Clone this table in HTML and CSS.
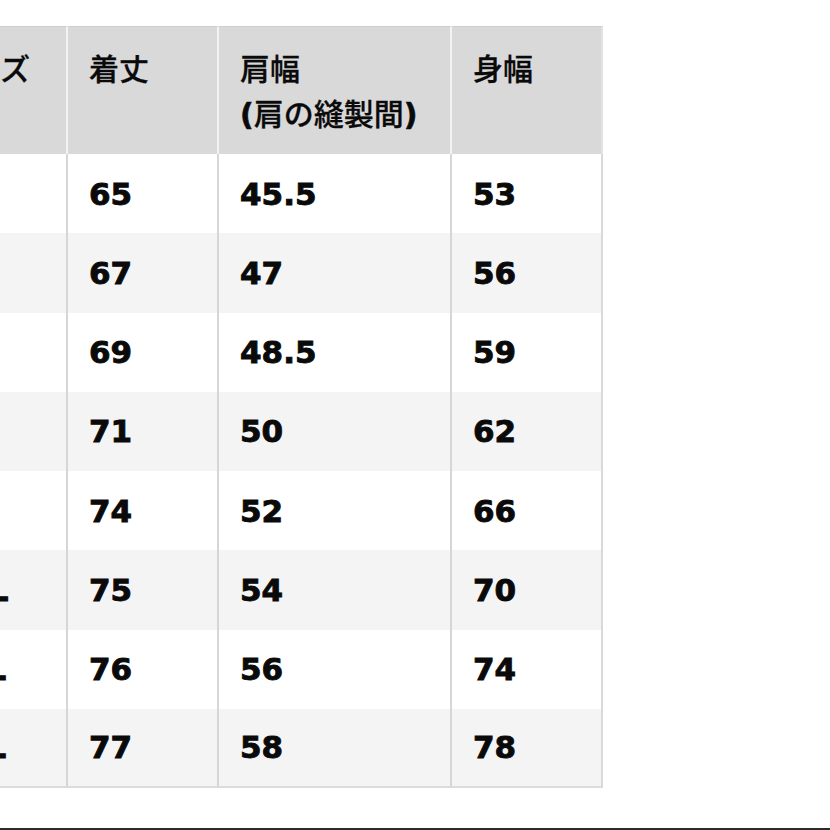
FILE: index.html
```html
<!DOCTYPE html>
<html lang="ja">
<head>
<meta charset="utf-8">
<title>サイズ表</title>
<link rel="stylesheet" href="styles.css">
</head>
<body>
<div class="page">
  <div class="size-table" role="table">
    <div class="cell head first" role="columnheader">サイズ</div>
    <div class="cell head" role="columnheader">着丈</div>
    <div class="cell head" role="columnheader">肩幅<br><span class="paren">(</span>肩の縫製間<span class="paren">)</span></div>
    <div class="cell head last" role="columnheader">身幅</div>

    <div class="cell odd first">XS</div><div class="cell odd">65</div><div class="cell odd">45.5</div><div class="cell odd last">53</div>
    <div class="cell even first">S</div><div class="cell even">67</div><div class="cell even">47</div><div class="cell even last">56</div>
    <div class="cell odd first">M</div><div class="cell odd">69</div><div class="cell odd">48.5</div><div class="cell odd last">59</div>
    <div class="cell even first">L</div><div class="cell even">71</div><div class="cell even">50</div><div class="cell even last">62</div>
    <div class="cell odd first">XL</div><div class="cell odd">74</div><div class="cell odd">52</div><div class="cell odd last">66</div>
    <div class="cell even first">XXL</div><div class="cell even">75</div><div class="cell even">54</div><div class="cell even last">70</div>
    <div class="cell odd first">3XL</div><div class="cell odd">76</div><div class="cell odd">56</div><div class="cell odd last">74</div>
    <div class="cell even bottom first">4XL</div><div class="cell even bottom">77</div><div class="cell even bottom">58</div><div class="cell even bottom last">78</div>
  </div>
  <div class="rule"></div>
</div>
</body>
</html>
```

FILE: styles.css
```css
html, body {
  margin: 0;
  padding: 0;
  background: #ffffff;
}

body {
  width: 830px;
  height: 830px;
  overflow: hidden;
  color: #0a0a0a;
}

.page {
  padding-top: 26px;
}

.size-table {
  display: grid;
  grid-template-columns: 151px 151px 233px 151px;
  grid-template-rows: 128px repeat(8, 79.25px);
  margin-left: -83px;
  width: 686px;
}

.cell {
  box-sizing: border-box;
  padding-left: 21px;
  border-right: 2px solid #d6d6d6;
  font-family: "DejaVu Sans", "Noto Sans CJK JP", sans-serif;
  font-weight: 700;
  font-size: 31px;
  -webkit-text-stroke: 0.9px #0a0a0a;
  display: flex;
  align-items: center;
}

.cell.first {
  padding-left: 24px;
}

.cell.head {
  display: block;
  background: #d9d9d9;
  border-top: 1px solid #cdcdcd;
  border-right: 2px solid #f3f3f3;
  padding-top: 18px;
  font-family: "Noto Sans CJK JP", sans-serif;
  font-weight: 500;
  font-size: 30px;
  line-height: 45px;
  -webkit-text-stroke: 0.3px #0a0a0a;
}

.cell.head.last {
  border-right: 2px solid #e2e2e2;
}

.paren {
  font-family: "DejaVu Sans", sans-serif;
  font-weight: 700;
  -webkit-text-stroke: 0.6px #0a0a0a;
}

.odd {
  background: #ffffff;
}

.even {
  background: #f4f4f4;
}

.cell.last {
  border-right-color: #d9d9d9;
}

.bottom {
  border-bottom: 2px solid #dcdcdc;
}

.rule {
  margin-top: 40px;
  height: 2px;
  background: #2b2b2b;
}
```
